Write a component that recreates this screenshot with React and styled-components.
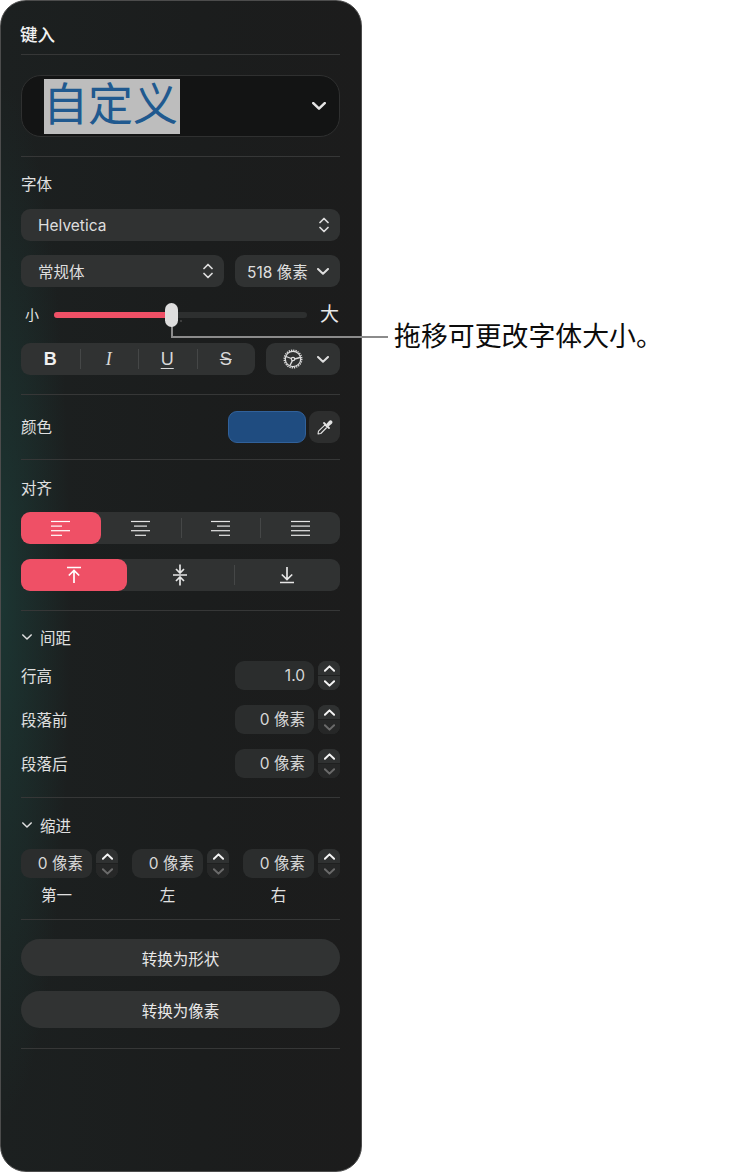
import React from "react";
import styled, { createGlobalStyle } from "styled-components";

const GlobalStyle = createGlobalStyle`
  html, body {
    margin: 0;
    padding: 0;
    background: #fff;
  }
  * {
    box-sizing: border-box;
  }
`;

const Page = styled.div`
  position: relative;
  width: 729px;
  height: 1173px;
  font-family: Inter, "Noto Sans CJK SC", sans-serif;
`;

const Panel = styled.aside`
  width: 362px;
  height: 1172px;
  padding: 0 21px 0 20px;
  border: 1px solid #4c4c4c;
  border-radius: 26px;
  color: #e4e4e4;
  background:
    radial-gradient(ellipse 70px 520px at 0 600px, rgba(28, 74, 68, 0.5), rgba(28, 74, 68, 0) 100%),
    linear-gradient(90deg, #1c2020 0, #1b1d1d 55%, #1c1c1c 100%);
`;

const Section = styled.section`
  display: flex;
  flex-direction: column;
  padding: ${(p) => p.$pt}px 0 ${(p) => p.$pb}px;
  border-bottom: 1px solid #363737;
`;

const Title = styled.h1`
  margin: 0 0 0 -1px;
  height: 20px;
  font-size: 17.5px;
  line-height: 20px;
  font-weight: 500;
  color: #f2f2f2;
`;

const Label = styled.div`
  height: 20px;
  font-size: 15.5px;
  line-height: 22px;
  font-weight: 400;
  color: #e0e0e0;
  white-space: nowrap;
  margin-bottom: ${(p) => p.$mb || 0}px;
`;

const TextPreview = styled.div`
  display: flex;
  align-items: center;
  justify-content: space-between;
  height: 62px;
  padding: 0 13px 0 22px;
  border: 1px solid #2f3030;
  border-radius: 20px;
  background: #131414;
  color: #e4e4e4;
`;

const Selected = styled.span`
  display: block;
  width: 136px;
  height: 55px;
  background: #bdbdbd;
  color: #20598f;
  font-size: 45px;
  line-height: 52px;
  font-weight: 400;
  text-indent: -1px;
  white-space: nowrap;
`;

const Select = styled.div`
  display: flex;
  align-items: center;
  justify-content: space-between;
  flex: ${(p) => (p.$w ? `0 0 ${p.$w}px` : "1 1 auto")};
  height: 32px;
  padding: ${(p) => p.$pad || "0 11px 0 17px"};
  border-radius: 9px;
  background: #303232;
  color: #dedede;
  font-size: 15.5px;
  white-space: nowrap;
`;

const Row = styled.div`
  display: flex;
  align-items: center;
  justify-content: space-between;
  gap: ${(p) => p.$gap || 0}px;
  margin-top: ${(p) => p.$mt || 0}px;
`;

const SliderRow = styled.div`
  display: flex;
  align-items: center;
  height: 28px;
  margin-top: 14px;
`;

const SizeMark = styled.span`
  flex: 0 0 ${(p) => p.$w}px;
  padding-left: ${(p) => p.$pl}px;
  font-size: ${(p) => p.$size}px;
  line-height: 28px;
  color: #e8e8e8;
`;

const Track = styled.div`
  position: relative;
  width: 253px;
  height: 6px;
  margin-right: 12px;
  border-radius: 3px;
  background: #2d2f2f;
`;

const TrackFill = styled.div`
  height: 6px;
  border-radius: 3px 0 0 3px;
  background: #ef5066;
`;

const Thumb = styled.div`
  position: absolute;
  top: -9px;
  left: 111px;
  z-index: 2;
  width: 13px;
  height: 24px;
  border-radius: 6.5px;
  background: #dedede;
`;

const Tick = styled.div`
  position: absolute;
  top: 8px;
  left: 126px;
  width: 2px;
  height: 2px;
  border-radius: 50%;
  background: #4a4a4a;
`;

const Segmented = styled.div`
  display: grid;
  grid-template-columns: repeat(${(p) => p.$count}, 1fr);
  flex: ${(p) => (p.$w ? `0 0 ${p.$w}px` : "1 1 auto")};
  height: 32px;
  border-radius: 9px;
  background: #303232;
  margin-top: ${(p) => p.$mt || 0}px;
`;

const Segment = styled.div`
  position: relative;
  display: flex;
  align-items: center;
  justify-content: center;
  border-radius: ${(p) => (p.$active ? "9px" : "0")};
  background: ${(p) => (p.$active ? "#ef5066" : "transparent")};
  color: ${(p) => (p.$active ? "#fff" : "#e6e6e6")};

  &::before {
    content: "";
    display: ${(p) => (p.$sep ? "block" : "none")};
    position: absolute;
    left: 0;
    top: 6px;
    bottom: 6px;
    width: 1px;
    background: #454747;
  }
`;

const StyleLetter = styled.span`
  font-family: ${(p) => (p.$italic ? '"Liberation Serif"' : '"Liberation Sans"')}, sans-serif;
  font-size: 18px;
  line-height: 20px;
  font-weight: ${(p) => (p.$bold ? 700 : 400)};
  font-style: ${(p) => (p.$italic ? "italic" : "normal")};
  color: ${(p) => (p.$bold ? "#f0f0f0" : "#d8d8d8")};
  text-decoration: ${(p) => p.$line || "none"};
  text-underline-offset: 3px;
`;

const GearButton = styled.div`
  display: flex;
  align-items: center;
  gap: 14px;
  flex: 0 0 74px;
  height: 32px;
  padding-left: 17px;
  border-radius: 9px;
  background: #303232;
  color: #dedede;
`;

const Swatches = styled.div`
  display: flex;
  gap: 3px;
`;

const Swatch = styled.div`
  width: 78px;
  height: 32px;
  border: 1px solid #31619a;
  border-radius: 9px;
  background: #1f4c80;
`;

const IconButton = styled.div`
  display: flex;
  align-items: center;
  justify-content: center;
  width: 31px;
  height: 32px;
  border-radius: 9px;
  background: #2d2e2e;
  color: #e2e2e2;
`;

const SpinWrap = styled.div`
  display: flex;
  gap: 4px;
`;

const SpinInput = styled.div`
  flex: 0 0 ${(p) => p.$w}px;
  height: 29px;
  padding-right: 9px;
  border-radius: 9px;
  background: #2b2d2d;
  color: #d8d8d8;
  font-size: 15.5px;
  line-height: 29px;
  text-align: right;
  white-space: nowrap;
`;

const Arrows = styled.div`
  display: flex;
  flex-direction: column;
  width: 22px;
  height: 29px;
  border-radius: 8px;
  overflow: hidden;
  background: #2d2f2f;
`;

const ArrowHalf = styled.div`
  display: flex;
  align-items: center;
  justify-content: center;
  flex: 1;
  background: ${(p) => (p.$off ? "#262727" : "#2f3131")};
  color: ${(p) => (p.$off ? "#6a6a6a" : "#f4f4f4")};

  & + & {
    border-top: 1px solid #1f2020;
  }
`;

const Collapse = styled.div`
  display: flex;
  align-items: center;
  gap: 8px;
  height: 20px;
  margin-bottom: 13px;
  padding: 0 0 2px 1px;
  color: #e0e0e0;
  font-size: 15.5px;
`;

const IndentGrid = styled.div`
  display: grid;
  grid-template-columns: repeat(3, 1fr);
  column-gap: 14px;
`;

const IndentCell = styled.div`
  display: flex;
  flex-direction: column;
`;

const IndentLabel = styled.div`
  width: 71px;
  height: 20px;
  margin-top: 7px;
  font-size: 15.5px;
  line-height: 22px;
  text-align: center;
  color: #e0e0e0;
`;

const PillButton = styled.button`
  height: 37px;
  margin-top: ${(p) => p.$mt || 0}px;
  padding: 0;
  border: 0;
  border-radius: 19px;
  background: #313333;
  color: #e8e8e8;
  font-family: inherit;
  font-size: 15.5px;
`;

const CalloutLine = styled.div`
  position: absolute;
  left: 171px;
  top: 326px;
  z-index: 1;
  width: 217px;
  height: 12px;
  border-left: 2px solid #8b8b8b;
  border-bottom: 2px solid #8b8b8b;
`;

const CalloutText = styled.div`
  position: absolute;
  left: 394px;
  top: 318px;
  font-size: 26.9px;
  line-height: 36px;
  color: #0c0c0c;
  white-space: nowrap;
`;

const Chevron = ({ w = 12, h = 7, sw = 2, up = false }) => (
  <svg width={w} height={h} viewBox="0 0 12 7" fill="none">
    <path
      d={up ? "M1 6L6 1.2L11 6" : "M1 1L6 5.8L11 1"}
      stroke="currentColor"
      strokeWidth={sw}
      strokeLinecap="round"
      strokeLinejoin="round"
    />
  </svg>
);

const UpDown = () => (
  <svg width="10" height="16" viewBox="0 0 10 16" fill="none">
    <path
      d="M1 5.5L5 1.5L9 5.5M1 10.5L5 14.5L9 10.5"
      stroke="currentColor"
      strokeWidth="1.7"
      strokeLinecap="round"
      strokeLinejoin="round"
    />
  </svg>
);

const Lines = ({ rows }) => (
  <svg width="19" height="16" viewBox="0 0 19 16" stroke="currentColor" strokeWidth="1.2">
    {rows.map(([x1, x2], i) => (
      <line key={i} x1={x1} x2={x2} y1={1.5 + i * 4.6} y2={1.5 + i * 4.6} />
    ))}
  </svg>
);

const VAlignTop = () => (
  <svg width="16" height="18" viewBox="0 0 16 18" fill="none" stroke="currentColor" strokeWidth="1.7">
    <path d="M1 1.5H15M8 17V4.5M2.8 9.5L8 4.5L13.2 9.5" />
  </svg>
);

const VAlignMiddle = () => (
  <svg width="16" height="22" viewBox="0 0 16 22" fill="none" stroke="currentColor" strokeWidth="1.7">
    <path d="M1 11H15M8 0.5V8.5M4 5L8 9L12 5M8 21.5V13.5M4 17L8 13L12 17" />
  </svg>
);

const VAlignBottom = () => (
  <svg width="16" height="18" viewBox="0 0 16 18" fill="none" stroke="currentColor" strokeWidth="1.7">
    <path d="M1 16.5H15M8 1V13.5M2.8 8.5L8 13.5L13.2 8.5" />
  </svg>
);

const Gear = () => (
  <svg width="20" height="20" viewBox="0 0 20 20" fill="none" stroke="currentColor">
    <circle cx="10" cy="10" r="8.8" strokeWidth="1.4" strokeDasharray="1.3 1" />
    <circle cx="10" cy="10" r="7.7" strokeWidth="1.2" />
    <circle cx="10" cy="10" r="1.7" strokeWidth="1.2" />
    <path d="M3 7.5L8.4 9.5M11.7 10L17 8.5M9.4 11.6L7 16.5" strokeWidth="1.3" />
  </svg>
);

const Dropper = () => (
  <svg width="18" height="18" viewBox="0 0 18 18" fill="none">
    <path d="M2 16L2.5 13.2L9 6.8L11.2 9L4.8 15.5Z" stroke="currentColor" strokeWidth="1.1" strokeLinejoin="round" />
    <path d="M8 5L13 10" stroke="currentColor" strokeWidth="1.8" strokeLinecap="round" />
    <path d="M10.2 6.2L12.8 3.2C13.8 2 15.2 2 16 2.9C16.8 3.8 16.6 5 15.5 6L12.4 8.6Z" fill="currentColor" />
  </svg>
);

const Stepper = ({ value, width, downOff }) => (
  <SpinWrap>
    <SpinInput $w={width}>{value}</SpinInput>
    <Arrows>
      <ArrowHalf>
        <Chevron w={11} h={7} sw={2.2} up />
      </ArrowHalf>
      <ArrowHalf $off={downOff}>
        <Chevron w={11} h={7} sw={2.2} />
      </ArrowHalf>
    </Arrows>
  </SpinWrap>
);

const hAlign = [
  [[0, 19], [0, 11], [0, 19], [0, 11]],
  [[0, 19], [3, 16], [0, 19], [4, 15]],
  [[0, 19], [6, 19], [0, 19], [8, 19]],
  [[0, 19], [0, 19], [0, 19], [0, 19]],
];

const spacing = [
  { label: "行高", value: "1.0", downOff: false },
  { label: "段落前", value: "0 像素", downOff: true },
  { label: "段落后", value: "0 像素", downOff: true },
];

const indents = ["第一", "左", "右"];

export default function App() {
  return (
    <Page>
      <GlobalStyle />
      <Panel>
        <Section $pt={24} $pb={9}>
          <Title>键入</Title>
        </Section>

        <Section $pt={20} $pb={19}>
          <TextPreview>
            <Selected>自定义</Selected>
            <Chevron w={14} h={8} sw={2.2} />
          </TextPreview>
        </Section>

        <Section $pt={17} $pb={19}>
          <Label $mb={15}>字体</Label>
          <Select>
            Helvetica
            <UpDown />
          </Select>
          <Row $gap={11} $mt={14}>
            <Select>
              常规体
              <UpDown />
            </Select>
            <Select $w={105} $pad="0 11px 0 12px">
              518 像素
              <Chevron />
            </Select>
          </Row>
          <SliderRow>
            <SizeMark $w={33} $pl={4} $size={14}>
              小
            </SizeMark>
            <Track>
              <TrackFill style={{ width: "45%" }} />
              <Thumb />
              <Tick />
            </Track>
            <SizeMark $w={20} $pl={1} $size={19}>
              大
            </SizeMark>
          </SliderRow>
          <Row $mt={14}>
            <Segmented $count={4} $w={234}>
              <Segment>
                <StyleLetter $bold>B</StyleLetter>
              </Segment>
              <Segment $sep>
                <StyleLetter $italic>I</StyleLetter>
              </Segment>
              <Segment $sep>
                <StyleLetter $line="underline">U</StyleLetter>
              </Segment>
              <Segment $sep>
                <StyleLetter $line="line-through">S</StyleLetter>
              </Segment>
            </Segmented>
            <GearButton>
              <Gear />
              <Chevron />
            </GearButton>
          </Row>
        </Section>

        <Section $pt={16} $pb={16}>
          <Row>
            <Label>颜色</Label>
            <Swatches>
              <Swatch />
              <IconButton>
                <Dropper />
              </IconButton>
            </Swatches>
          </Row>
        </Section>

        <Section $pt={18} $pb={19}>
          <Label $mb={14}>对齐</Label>
          <Segmented $count={4}>
            {hAlign.map((rows, i) => (
              <Segment key={i} $active={i === 0} $sep={i > 1}>
                <Lines rows={rows} />
              </Segment>
            ))}
          </Segmented>
          <Segmented $count={3} $mt={15}>
            <Segment $active>
              <VAlignTop />
            </Segment>
            <Segment>
              <VAlignMiddle />
            </Segment>
            <Segment $sep>
              <VAlignBottom />
            </Segment>
          </Segmented>
        </Section>

        <Section $pt={17} $pb={19}>
          <Collapse>
            <Chevron w={10} h={6} sw={1.8} />
            间距
          </Collapse>
          {spacing.map((item, i) => (
            <Row key={item.label} $mt={i ? 15 : 0}>
              <Label>{item.label}</Label>
              <Stepper value={item.value} width={79} downOff={item.downOff} />
            </Row>
          ))}
        </Section>

        <Section $pt={18} $pb={14}>
          <Collapse>
            <Chevron w={10} h={6} sw={1.8} />
            缩进
          </Collapse>
          <IndentGrid>
            {indents.map((label) => (
              <IndentCell key={label}>
                <Stepper value="0 像素" width={71} downOff />
                <IndentLabel>{label}</IndentLabel>
              </IndentCell>
            ))}
          </IndentGrid>
        </Section>

        <Section $pt={19} $pb={20}>
          <PillButton>转换为形状</PillButton>
          <PillButton $mt={15}>转换为像素</PillButton>
        </Section>
      </Panel>
      <CalloutLine />
      <CalloutText>拖移可更改字体大小。</CalloutText>
    </Page>
  );
}
